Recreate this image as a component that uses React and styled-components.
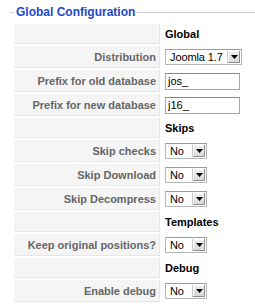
import React from "react";
import styled, { createGlobalStyle } from "styled-components";

const Global = createGlobalStyle`
  html, body { margin: 0; padding: 0; background: #fff; }
  body { font-family: "Liberation Sans", Arial, Helvetica, sans-serif; }
`;

const Fieldset = styled.fieldset`
  margin: 5px 0 0 11px;
  padding: 4px 0 0 3px;
  border: none;
  border-top: 1px solid #cccccc;
  min-width: 0;
`;

const Legend = styled.legend`
  padding: 0 2px;
  font-size: 12px;
  line-height: 15px;
  font-weight: bold;
  color: #1b48cc;
`;

const Table = styled.table`
  border-spacing: 2px;
  border-collapse: separate;
  margin-left: -2px;
  margin-top: -2px;
`;

const Row = styled.tr`
  height: ${(p) => (p.$header ? "20px" : "22px")};
`;

const Key = styled.td`
  width: 146px;
  box-sizing: border-box;
  padding: 0 3px 0 3px;
  background: #f5f5f5;
  border-bottom: 1px solid #e6e6e6;
  border-right: 1px solid #e6e6e6;
  text-align: right;
  color: #666666;
  font-weight: bold;
  font-size: 11px;
  white-space: nowrap;
  vertical-align: middle;
`;

const Val = styled.td`
  padding: 0 3px;
  vertical-align: middle;
  font-size: 11px;
`;

const SectionTitle = styled.span`
  font-weight: bold;
  font-size: 11px;
  color: #000;
`;

const TextBox = styled.div`
  box-sizing: border-box;
  width: 75px;
  height: 17px;
  border: 1px solid #a9a9a9;
  border-top-color: #8a8a8a;
  background: #fff;
  font-size: 11px;
  line-height: 15px;
  padding: 0 2px;
  color: #000;
`;

const Select = styled.div`
  box-sizing: border-box;
  display: flex;
  align-items: stretch;
  width: ${(p) => p.$w}px;
  height: 16px;
  border: 1px solid #b5b5b5;
  border-top-color: #9a9a9a;
  background: #fff;
`;

const SelectText = styled.span`
  flex: 1;
  font-size: 11px;
  line-height: 14px;
  padding-left: 4px;
  color: #000;
  white-space: nowrap;
  overflow: hidden;
  letter-spacing: -0.1px;
`;

const Arrow = styled.span`
  width: 12px;
  flex: none;
  margin: 1px 1px 1px 0;
  background: linear-gradient(#f0f0f0, #d6d6d6);
  border-left: 1px solid #c8c8c8;
  box-shadow: inset -1px -1px 0 #8c8c8c, inset 1px 1px 0 #fff;
  display: flex;
  align-items: center;
  justify-content: center;
`;

const Tri = () => (
  <svg width="7" height="4" viewBox="0 0 7 4">
    <path d="M0 0H7L3.5 4Z" fill="#000" />
  </svg>
);

const Dropdown = ({ value, w }) => (
  <Select $w={w}>
    <SelectText>{value}</SelectText>
    <Arrow>
      <Tri />
    </Arrow>
  </Select>
);

const rows = [
  { h: "Global" },
  { k: "Distribution", sel: "Joomla 1.7", w: 77 },
  { k: "Prefix for old database", text: "jos_" },
  { k: "Prefix for new database", text: "j16_" },
  { h: "Skips" },
  { k: "Skip checks", sel: "No", w: 42 },
  { k: "Skip Download", sel: "No", w: 42 },
  { k: "Skip Decompress", sel: "No", w: 42 },
  { h: "Templates" },
  { k: "Keep original positions?", sel: "No", w: 42 },
  { h: "Debug" },
  { k: "Enable debug", sel: "No", w: 42 },
];

export default function App() {
  return (
    <>
      <Global />
      <Fieldset>
        <Legend>Global Configuration</Legend>
        <Table>
          <tbody>
            {rows.map((r, i) =>
              r.h ? (
                <Row key={i} $header>
                  <Key />
                  <Val>
                    <SectionTitle>{r.h}</SectionTitle>
                  </Val>
                </Row>
              ) : (
                <Row key={i}>
                  <Key>{r.k}</Key>
                  <Val>
                    {r.sel ? <Dropdown value={r.sel} w={r.w} /> : <TextBox>{r.text}</TextBox>}
                  </Val>
                </Row>
              )
            )}
          </tbody>
        </Table>
      </Fieldset>
    </>
  );
}
